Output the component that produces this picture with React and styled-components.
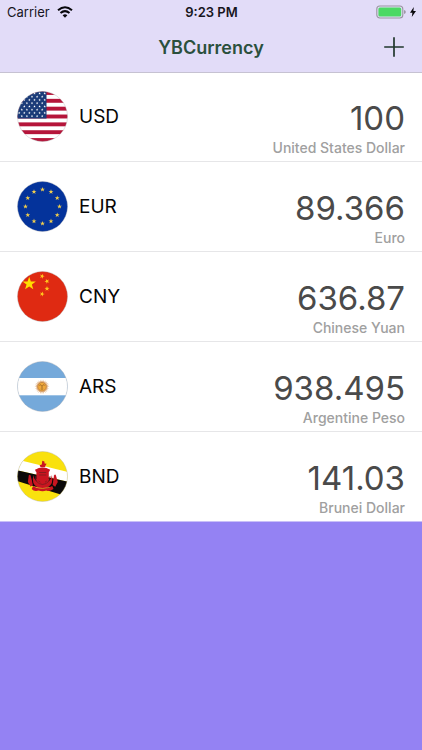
import React from "react";
import styled, { createGlobalStyle } from "styled-components";

const GlobalStyle = createGlobalStyle`
  *, *::before, *::after { box-sizing: border-box; }
  body {
    margin: 0;
    background: #9482f3;
    font-family: Inter, "Liberation Sans", sans-serif;
  }
`;

const Screen = styled.div`
  min-height: 100vh;
  background: #9482f3;
`;

const Header = styled.header`
  position: relative;
  background: #e2dcf8;
  box-shadow: 0 1px 0 #c6c2d2;
`;

const StatusBar = styled.div`
  display: grid;
  grid-template-columns: 1fr auto 1fr;
  align-items: center;
  height: 24px;
  padding: 0 6px 0 7px;
  color: #17151d;
  font-size: 13px;
  line-height: 16px;
`;

const StatusGroup = styled.div`
  display: flex;
  align-items: center;
  gap: ${(p) => p.$gap};
  justify-content: ${(p) => (p.$end ? "flex-end" : "flex-start")};
`;

const Clock = styled.time`
  font-weight: 600;
`;

const NavBar = styled.div`
  display: grid;
  grid-template-columns: 1fr auto 1fr;
  align-items: center;
  height: 48px;
  padding: 0 17px;
`;

const Title = styled.h1`
  grid-column: 2;
  margin: 0;
  color: #2b503d;
  font-size: 18px;
  font-weight: 600;
  line-height: 24px;
`;

const AddButton = styled.button`
  justify-self: end;
  display: flex;
  padding: 0 0 2px;
  border: 0;
  background: none;
  color: #21372d;
  cursor: pointer;
`;

const List = styled.ul`
  margin: 0;
  padding: 0;
  list-style: none;
`;

const Row = styled.li`
  display: grid;
  grid-template-columns: auto 1fr auto;
  column-gap: 11px;
  align-items: center;
  padding: 0 17px;
  background: #fff;
  border-bottom: 1px solid #e6e6e8;

  &:last-child { border-bottom-color: #c9c0f8; }
`;

const Flag = styled.svg`
  display: block;
  width: 51px;
  height: 51px;
`;

const Code = styled.span`
  padding-top: 1px;
  color: #050505;
  font-size: 19px;
  line-height: 24px;
`;

const Value = styled.div`
  padding: 25px 0 4px;
  text-align: right;
`;

const Amount = styled.div`
  color: #4a4a4a;
  font-size: 33px;
  font-weight: 400;
  line-height: 42px;
`;

const Name = styled.div`
  color: #a0a0a0;
  font-size: 14px;
  font-weight: 500;
  line-height: 18px;
`;

const starPoints = (cx, cy, r, turn = 0) =>
  Array.from({ length: 10 }, (_, i) => {
    const a = ((i * 36 - 90 + turn) * Math.PI) / 180;
    const d = i % 2 ? r * 0.4 : r;
    return `${(cx + d * Math.cos(a)).toFixed(2)},${(cy + d * Math.sin(a)).toFixed(2)}`;
  }).join(" ");

const Star = ({ x, y, r, turn, fill }) => (
  <polygon points={starPoints(x, y, r, turn)} fill={fill} />
);

const UsFlag = () => (
  <>
    <rect width="51" height="51" fill="#fff" />
    {[0, 1, 2, 3, 4, 5, 6].map((i) => (
      <rect key={i} y={(i * 2 * 51) / 13} width="51" height={51 / 13} fill="#b5153a" />
    ))}
    <rect width="29.5" height="27.5" fill="#1b3b78" />
    {Array.from({ length: 8 }, (_, r) =>
      Array.from({ length: r % 2 ? 5 : 6 }, (_, c) => (
        <Star
          key={`${r}-${c}`}
          x={(r % 2 ? 4.8 : 2.2) + c * 5.1}
          y={2.4 + r * 3.25}
          r={1.3}
          fill="#fff"
        />
      ))
    )}
  </>
);

const EuFlag = () => (
  <>
    <rect width="51" height="51" fill="#04339b" />
    {Array.from({ length: 12 }, (_, i) => {
      const a = (i * Math.PI) / 6;
      return (
        <Star key={i} x={25.5 + 17 * Math.sin(a)} y={25.5 - 17 * Math.cos(a)} r={2.6} fill="#f3cf4b" />
      );
    })}
  </>
);

const CnFlag = () => (
  <>
    <rect width="51" height="51" fill="#df2a12" />
    <Star x={12.2} y={12.7} r={7} fill="#ffde00" />
    <Star x={25.1} y={5.2} r={2.6} turn={20} fill="#ffc51c" />
    <Star x={30} y={10.3} r={2.6} turn={45} fill="#ffc51c" />
    <Star x={30} y={17.7} r={2.6} turn={0} fill="#ffc51c" />
    <Star x={25.1} y={23} r={2.6} turn={20} fill="#ffc51c" />
  </>
);

const ArFlag = () => (
  <>
    <rect width="51" height="51" fill="#75a9da" />
    <rect y="17" width="51" height="17.3" fill="#fff" />
    {Array.from({ length: 24 }, (_, i) => (
      <path
        key={i}
        d="M25 18.2 L25.7 22 L24.3 22Z"
        fill="#dfb183"
        transform={`rotate(${i * 15} 25 25.7)`}
      />
    ))}
    <circle cx="25" cy="25.7" r="5.6" fill="#e3b58a" />
    <circle cx="25" cy="25.7" r="4.3" fill="#f0a93c" stroke="#b97a35" strokeWidth=".7" />
    <path
      d="M22.4 24.3 Q23.5 23.3 24.6 24.5 M25.4 24.5 Q26.5 23.3 27.6 24.3 M25 24.5 V27 M23.8 28 H26.2"
      fill="none"
      stroke="#8b5a22"
      strokeWidth=".8"
    />
  </>
);

const BnFlag = () => (
  <>
    <rect width="51" height="51" fill="#f9e10e" />
    <path d="M-1 8.2 L52 21.2 V31 L-1 19Z" fill="#fff" />
    <path d="M-1 19 L52 31 V46 L-1 29.6Z" fill="#0b0909" />
    <g fill="#c91520">
      <path d="M25.3 9.7 L27.4 10.6 L27.6 12.4 L29.7 12.7 L28.6 14.3 L28 16.3 H23.6 L22.6 14.2 L24.8 13.6Z" />
      <path d="M18 18.7 Q25.6 14.3 33.2 18.7 L32 21 Q25.6 18 19 21Z" />
      <rect x="19.4" y="19" width="12.4" height="11" rx="1.5" />
      <path d="M16.3 24 Q17 31.5 25.6 32.5 Q34.2 31.5 34.9 24 Q37 33 30.6 36.5 Q25.6 39 20.5 36.5 Q14.2 33 16.3 24Z" />
      <path d="M19 28 H32.2 L30.5 34 H20.7Z" />
      <path d="M11.7 24.7 Q12.3 23 13.6 24.6 L14.8 29 L15.8 34 L13.6 35.8 L10.9 31Z" />
      <path d="M39 24.7 Q38.2 22.5 37 24.5 L35.6 34 L38.2 35.8 L40.8 31Z" />
      <path d="M16 35 Q25.5 40 35.3 35 L36.5 38 Q32 40.9 29.3 39.5 Q25.5 41 21.7 39.5 Q17 40.8 14.7 38Z" />
    </g>
    <path
      d="M18.2 25 Q18 32.5 25.6 33.5 Q33.2 32.5 33 25 M22.2 21.5 H29.2 M22.2 24 H29.2 M21.5 30 L23.3 31.2 M28 31.2 L29.8 30"
      fill="none"
      stroke="#6b2020"
      strokeWidth=".7"
    />
    <path
      d="M18.5 36.3 Q25.6 38.7 32.7 36.3"
      fill="none"
      stroke="#efc52a"
      strokeWidth=".6"
    />
  </>
);

const currencies = [
  { code: "USD", amount: "100", name: "United States Dollar", Art: UsFlag },
  { code: "EUR", amount: "89.366", name: "Euro", Art: EuFlag },
  { code: "CNY", amount: "636.87", name: "Chinese Yuan", Art: CnFlag },
  { code: "ARS", amount: "938.495", name: "Argentine Peso", Art: ArFlag },
  { code: "BND", amount: "141.03", name: "Brunei Dollar", Art: BnFlag },
];

const CurrencyRow = ({ code, amount, name, Art }) => (
  <Row>
    <Flag viewBox="0 0 51 51" aria-hidden="true">
      <defs>
        <clipPath id={`flag-${code}`}>
          <circle cx="25.5" cy="25.5" r="25" />
        </clipPath>
      </defs>
      <g clipPath={`url(#flag-${code})`}>
        <Art />
      </g>
      <circle cx="25.5" cy="25.5" r="25" fill="none" stroke="#a9a9ad" strokeOpacity=".5" strokeWidth=".7" />
    </Flag>
    <Code>{code}</Code>
    <Value>
      <Amount>{amount}</Amount>
      <Name>{name}</Name>
    </Value>
  </Row>
);

const WifiIcon = () => (
  <svg width="16" height="12" viewBox="0 0 16 12" aria-hidden="true">
    <g fill="none" stroke="#08070b" strokeWidth="2">
      <path d="M1 4.2 Q8 -1.7 15 4.2" />
      <path d="M3.5 7 Q8 3.2 12.5 7" />
    </g>
    <path d="M5.6 9.2 Q8 7.2 10.4 9.2 L8 11.7Z" fill="#08070b" />
  </svg>
);

const BatteryIcon = () => (
  <svg width="30" height="14" viewBox="0 0 30 14" aria-hidden="true">
    <rect x=".8" y="1" width="26" height="12" rx="3" fill="none" stroke="#99949f" strokeWidth="1.1" />
    <rect x="2.4" y="2.6" width="22.8" height="8.8" rx="1.5" fill="#4cd964" />
    <path d="M28.2 5 Q29.7 5.5 29.7 7 Q29.7 8.5 28.2 9Z" fill="#8d8793" />
  </svg>
);

const BoltIcon = () => (
  <svg width="6" height="10" viewBox="0 0 6 10" aria-hidden="true">
    <path d="M3.8 0 L0 5.7 H2.4 L1.8 10 L6 4.1 H3.4Z" fill="#08070b" />
  </svg>
);

export default function App() {
  return (
    <Screen>
      <GlobalStyle />
      <Header>
        <StatusBar>
          <StatusGroup $gap="7px">
            <span>Carrier</span>
            <WifiIcon />
          </StatusGroup>
          <Clock>9:23 PM</Clock>
          <StatusGroup $gap="4px" $end>
            <BatteryIcon />
            <BoltIcon />
          </StatusGroup>
        </StatusBar>
        <NavBar>
          <Title>YBCurrency</Title>
          <AddButton type="button" aria-label="Add currency">
            <svg width="22" height="22" viewBox="0 0 22 22" aria-hidden="true">
              <path d="M11 1.2 V20.8 M1.2 11 H20.8" stroke="currentColor" strokeWidth="1.7" />
            </svg>
          </AddButton>
        </NavBar>
      </Header>
      <main>
        <List>
          {currencies.map((c) => (
            <CurrencyRow key={c.code} {...c} />
          ))}
        </List>
      </main>
    </Screen>
  );
}
